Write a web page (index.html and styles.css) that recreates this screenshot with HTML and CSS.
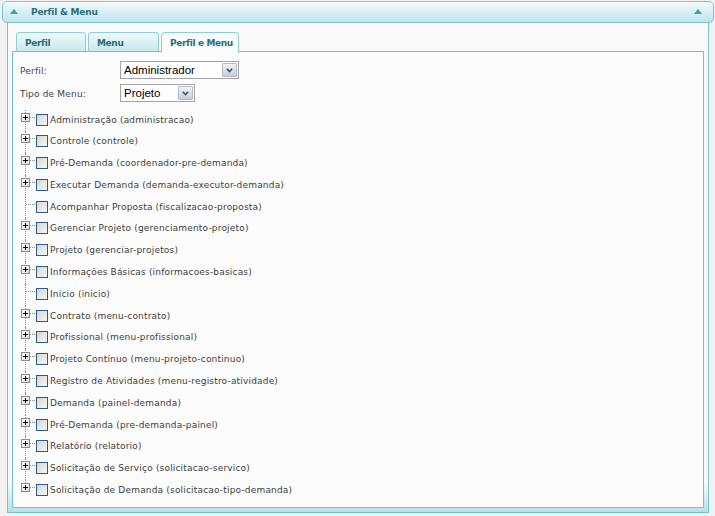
FILE: index.html
```html
<!DOCTYPE html>
<html lang="pt">
<head>
<meta charset="utf-8">
<title>Perfil &amp; Menu</title>
<link rel="stylesheet" href="styles.css">
</head>
<body>
<div class="panel">
  <div class="panel-header">
    <span class="tri"></span>
    <span class="panel-title">Perfil &amp; Menu</span>
    <span class="tri tri-right"></span>
  </div>
  <div class="panel-body">
    <div class="tabs">
      <div class="tab tab-w1">Perfil</div>
      <div class="tab tab-w2">Menu</div>
      <div class="tab tab-w3 active">Perfil e Menu</div>
    </div>
    <div class="tab-content">
      <div class="field">
        <label>Perfil:</label>
        <div class="select select-lg">Administrador<span class="btn"><svg width="7" height="5" viewBox="0 0 7 5"><path d="M0.8 0.8 L3.5 3.6 L6.2 0.8" fill="none" stroke="#3d4f73" stroke-width="1.6"/></svg></span></div>
      </div>
      <div class="field">
        <label>Tipo de Menu:</label>
        <div class="select select-sm">Projeto<span class="btn"><svg width="7" height="5" viewBox="0 0 7 5"><path d="M0.8 0.8 L3.5 3.6 L6.2 0.8" fill="none" stroke="#3d4f73" stroke-width="1.6"/></svg></span></div>
      </div>
      <ul class="tree">
        <li class="node"><span class="exp"><span class="plus"></span></span><span class="cb"></span><span class="lbl">Administração (administracao)</span></li>
        <li class="node"><span class="exp"><span class="plus"></span></span><span class="cb"></span><span class="lbl">Controle (controle)</span></li>
        <li class="node"><span class="exp"><span class="plus"></span></span><span class="cb"></span><span class="lbl">Pré-Demanda (coordenador-pre-demanda)</span></li>
        <li class="node"><span class="exp"><span class="plus"></span></span><span class="cb"></span><span class="lbl">Executar Demanda (demanda-executor-demanda)</span></li>
        <li class="node leaf"><span class="exp"></span><span class="cb"></span><span class="lbl">Acompanhar Proposta (fiscalizacao-proposta)</span></li>
        <li class="node"><span class="exp"><span class="plus"></span></span><span class="cb"></span><span class="lbl">Gerenciar Projeto (gerenciamento-projeto)</span></li>
        <li class="node"><span class="exp"><span class="plus"></span></span><span class="cb"></span><span class="lbl">Projeto (gerenciar-projetos)</span></li>
        <li class="node"><span class="exp"><span class="plus"></span></span><span class="cb"></span><span class="lbl">Informações Básicas (informacoes-basicas)</span></li>
        <li class="node leaf"><span class="exp"></span><span class="cb"></span><span class="lbl">Início (inicio)</span></li>
        <li class="node"><span class="exp"><span class="plus"></span></span><span class="cb"></span><span class="lbl">Contrato (menu-contrato)</span></li>
        <li class="node"><span class="exp"><span class="plus"></span></span><span class="cb"></span><span class="lbl">Profissional (menu-profissional)</span></li>
        <li class="node"><span class="exp"><span class="plus"></span></span><span class="cb"></span><span class="lbl">Projeto Contínuo (menu-projeto-continuo)</span></li>
        <li class="node"><span class="exp"><span class="plus"></span></span><span class="cb"></span><span class="lbl">Registro de Atividades (menu-registro-atividade)</span></li>
        <li class="node"><span class="exp"><span class="plus"></span></span><span class="cb"></span><span class="lbl">Demanda (painel-demanda)</span></li>
        <li class="node"><span class="exp"><span class="plus"></span></span><span class="cb"></span><span class="lbl">Pré-Demanda (pre-demanda-painel)</span></li>
        <li class="node"><span class="exp"><span class="plus"></span></span><span class="cb"></span><span class="lbl">Relatório (relatorio)</span></li>
        <li class="node"><span class="exp"><span class="plus"></span></span><span class="cb"></span><span class="lbl">Solicitação de Serviço (solicitacao-servico)</span></li>
        <li class="node"><span class="exp"><span class="plus"></span></span><span class="cb"></span><span class="lbl">Solicitação de Demanda (solicitacao-tipo-demanda)</span></li>
      </ul>
    </div>
  </div>
</div>
</body>
</html>
```

FILE: styles.css
```css
html, body {
  margin: 0;
  padding: 0;
}
body {
  background: #f2f2f2;
  font-family: "DejaVu Sans", Verdana, sans-serif;
  color: #3c3c3c;
}
.panel {
  width: 712px;
  margin: 1px 0 0 2px;
}
.panel-header {
  height: 22px;
  box-sizing: border-box;
  border: 1px solid #74c7d4;
  border-radius: 5px;
  background: linear-gradient(#f4fbfc 0%, #dcf1f4 45%, #bde4ea 100%);
  box-shadow: inset 0 1px 0 #ffffff;
  display: flex;
  align-items: center;
  padding: 0 11px 0 7px;
}
.tri {
  width: 0;
  height: 0;
  border-left: 4.5px solid transparent;
  border-right: 4.5px solid transparent;
  border-bottom: 5px solid #3aa2b3;
  margin-top: -1px;
}
.tri-right {
  margin-left: auto;
}
.panel-title {
  margin-left: 13px;
  font-size: 9px;
  letter-spacing: -0.2px;
  font-weight: bold;
  color: #27707f;
}
.panel-body {
  height: 490px;
  box-sizing: border-box;
  margin: 0 5px;
  border: 1px solid #6fc4d2;
  border-top: 0;
  padding: 9px 4px 4px;
  background: linear-gradient(to bottom, #fafafa calc(100% - 30px), #b6e1e8 100%);
  display: flex;
  flex-direction: column;
}
.tabs {
  display: flex;
  gap: 2px;
  padding-left: 4px;
  height: 20px;
  margin-bottom: -1px;
}
.tab {
  height: 21px;
  box-sizing: border-box;
  border: 1px solid #8dcfd9;
  border-bottom: 0;
  border-radius: 4px 4px 0 0;
  background: linear-gradient(#eef9fa, #c4e7ec);
  box-shadow: inset 0 1px 0 #ffffff;
  font-size: 9px;
  letter-spacing: -0.35px;
  font-weight: bold;
  color: #236e7d;
  padding: 0 8px;
  display: flex;
  align-items: center;
  white-space: nowrap;
}
.tab-w1 { width: 70px; }
.tab-w2 { width: 71px; }
.tab-w3 { width: 78px; }
.tab.active {
  background: linear-gradient(#f4fbfc, #fcfcfc 40%);
  position: relative;
  z-index: 1;
}
.tab-content {
  flex: 1;
  border: 1px solid #6fc4d2;
  background: #fcfcfc;
  padding: 9px 7px 0;
}
.field {
  display: flex;
  align-items: center;
  height: 18px;
  margin-bottom: 5px;
}
.field label {
  width: 100px;
  font-size: 9px;
  letter-spacing: 0.18px;
  color: #444444;
  padding-top: 1px;
}
.select {
  height: 18px;
  box-sizing: border-box;
  border: 1px solid #a4a4a4;
  background: #ffffff;
  display: flex;
  align-items: center;
  font-family: "Liberation Sans", Arial, sans-serif;
  font-size: 11.5px;
  color: #000000;
  padding-left: 3px;
}
.select-lg { width: 119px; }
.select-sm { width: 75px; }
.select .btn {
  margin-left: auto;
  margin-right: 1px;
  width: 15px;
  height: 14px;
  box-sizing: border-box;
  border: 1px solid #b4b9c8;
  border-radius: 1px;
  background: linear-gradient(#f3f4f8, #c9ccd8);
  display: flex;
  align-items: center;
  justify-content: center;
}
.tree {
  list-style: none;
  margin: 7.5px 0 0 -3px;
  padding: 0;
}
.node {
  display: flex;
  align-items: flex-start;
  height: 21.8px;
}
.exp {
  width: 17px;
  flex: none;
  align-self: stretch;
  position: relative;
}
.exp::before {
  content: "";
  position: absolute;
  left: 8px;
  top: 0;
  bottom: 0;
  border-left: 1px dotted #8e8e8e;
}
.node:last-child .exp::before {
  bottom: auto;
  height: 5px;
}
.exp::after {
  content: "";
  position: absolute;
  left: 9px;
  width: 9px;
  top: 7px;
  border-top: 1px dotted #8e8e8e;
}
.plus {
  display: block;
  position: relative;
  z-index: 1;
  width: 9px;
  height: 9px;
  box-sizing: border-box;
  margin: 3px 0 0 4px;
  border: 1px solid #8c8c8c;
  background: linear-gradient(135deg, #ffffff, #dcdcdc);
}
.plus::before {
  content: "";
  position: absolute;
  left: 1px;
  top: 3px;
  width: 5px;
  height: 1px;
  background: #000000;
}
.plus::after {
  content: "";
  position: absolute;
  left: 3px;
  top: 1px;
  width: 1px;
  height: 5px;
  background: #000000;
}
.cb {
  flex: none;
  width: 12px;
  height: 12px;
  box-sizing: border-box;
  margin: 4px 0 0 2px;
  border: 1px solid #2b5b8d;
  background: linear-gradient(135deg, #d6d6d1, #f7f7f5);
}
.lbl {
  font-size: 9px;
  line-height: 11px;
  letter-spacing: 0.18px;
  margin: 5px 0 0 2px;
  white-space: nowrap;
  color: #3c3c3c;
}
```
